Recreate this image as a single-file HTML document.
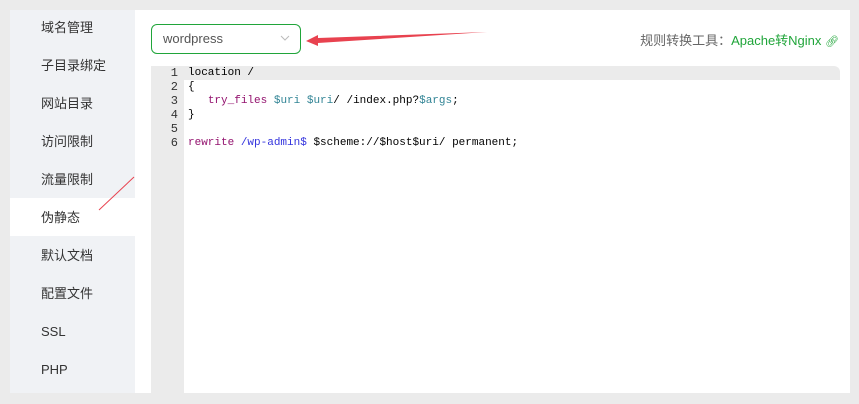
<!DOCTYPE html>
<html><head><meta charset="utf-8"><style>
*{margin:0;padding:0;box-sizing:border-box}
body{width:859px;height:404px;background:#ebebeb;position:relative;overflow:hidden;font-family:"Liberation Sans","Noto Sans CJK SC",sans-serif;}
.side{position:absolute;left:10px;top:10px;width:125px;height:383px;background:#f0f2f5}
.side div{position:absolute;left:0;width:125px;height:38px;line-height:38px;padding-left:31px;font-size:13px;color:#333}
.side div.act{background:#fff}
.main{position:absolute;left:135px;top:10px;width:715px;height:383px;background:#fff}
.sel{position:absolute;left:151px;top:24px;width:150px;height:30px;border:1px solid #20a53a;border-radius:6px;font-size:13px;color:#555;line-height:28px;padding-left:11px}
.sel svg{position:absolute;right:10px;top:10px}
.tool{position:absolute;right:20px;top:30px;font-size:13px;color:#666}
.tool b{font-weight:normal;color:#20a53a}
.ed{position:absolute;left:151px;top:66px;width:689px;height:327px;background:#fff;border-top-right-radius:6px;overflow:hidden}
.gut{position:absolute;left:0;top:0;width:33px;height:100%;background:#ebebeb}
.al{position:absolute;left:0;top:0;width:689px;height:14px;background:#ebebeb}
.ln{position:absolute;left:0;width:27px;text-align:right;font-family:"Liberation Mono",monospace;font-size:12px;color:#333}
.cd{position:absolute;left:37px;font-family:"Liberation Mono",monospace;font-size:11px;color:#000;white-space:pre}
.k{color:#93126e}.v{color:#318495}.r{color:#3333dd}
</style></head><body>
<div class="side">
<div style="top:-1px">域名管理</div>
<div style="top:37px">子目录绑定</div>
<div style="top:75px">网站目录</div>
<div style="top:113px">访问限制</div>
<div style="top:151px">流量限制</div>
<div class="act" style="top:188px;line-height:40px">伪静态</div>
<div style="top:227px">默认文档</div>
<div style="top:265px">配置文件</div>
<div style="top:303px">SSL</div>
<div style="top:341px">PHP</div>
</div>
<div class="main"></div>
<div class="sel">wordpress<svg width="10" height="6" viewBox="0 0 10 6"><path d="M1 1 L5 5 L9 1" fill="none" stroke="#bbb" stroke-width="1"/></svg></div>
<div class="tool">规则转换工具：<b>Apache转Nginx</b> <span style="color:#20a53a;font-size:11px">🔗︎</span></div>
<div class="ed">
<div class="gut"></div><div class="al"></div>
<div class="ln" style="top:0">1</div><div class="ln" style="top:14px">2</div><div class="ln" style="top:28px">3</div><div class="ln" style="top:42px">4</div><div class="ln" style="top:56px">5</div><div class="ln" style="top:70px">6</div>
<div class="cd" style="top:1px">location /</div>
<div class="cd" style="top:15px">{</div>
<div class="cd" style="top:29px">   <span class="k">try_files</span> <span class="v">$uri</span> <span class="v">$uri</span>/ /index.php?<span class="v">$args</span>;</div>
<div class="cd" style="top:43px">}</div>
<div class="cd" style="top:71px"><span class="k">rewrite</span> <span class="r">/wp-admin$</span> $scheme://$host$uri/ permanent;</div>
</div>
<svg style="position:absolute;left:0;top:0" width="859" height="404">
<polygon points="487,32 318,38 318,35 306,41 318,46 318,43" fill="#e8424f"/>
<line x1="134" y1="177" x2="99" y2="210" stroke="#e8424f" stroke-width="1"/>
</svg>
</body></html>
